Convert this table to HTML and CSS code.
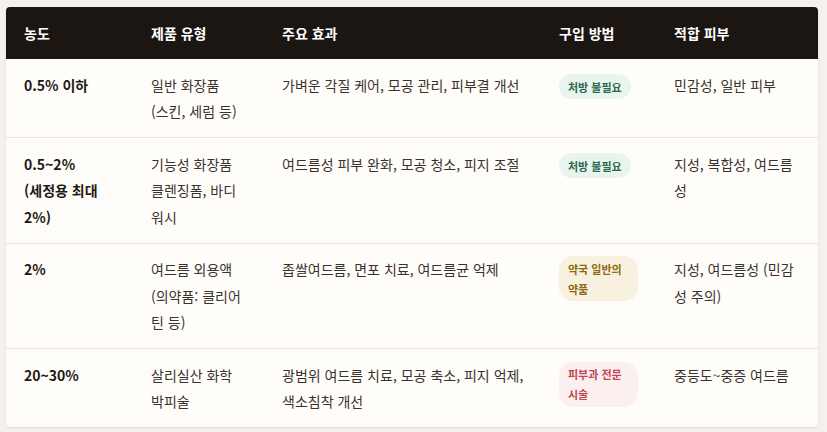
FILE: index.html
```html
<!DOCTYPE html>
<html lang="ko">
<head>
<meta charset="utf-8">
<link rel="stylesheet" href="styles.css">
</head>
<body>
<div class="card">
<table class="tbl">
<colgroup>
<col class="c1"><col class="c2"><col class="c3"><col class="c4"><col class="c5">
</colgroup>
<thead>
<tr><th>농도</th><th>제품 유형</th><th>주요 효과</th><th>구입 방법</th><th>적합 피부</th></tr>
</thead>
<tbody>
<tr>
<td class="conc">0.5% 이하</td>
<td>일반 화장품<br>(스킨, 세럼 등)</td>
<td>가벼운 각질 케어, 모공 관리, 피부결 개선</td>
<td><span class="badge green">처방 불필요</span></td>
<td>민감성, 일반 피부</td>
</tr>
<tr>
<td class="conc">0.5~2%<br>(세정용 최대 2%)</td>
<td>기능성 화장품<br>클렌징폼, 바디<br>워시</td>
<td>여드름성 피부 완화, 모공 청소, 피지 조절</td>
<td><span class="badge green">처방 불필요</span></td>
<td>지성, 복합성, 여드름성</td>
</tr>
<tr>
<td class="conc">2%</td>
<td>여드름 외용액<br>(의약품: 클리어<br>틴 등)</td>
<td>좁쌀여드름, 면포 치료, 여드름균 억제</td>
<td><span class="badge yellow">약국 일반의약품</span></td>
<td>지성, 여드름성 (민감성 주의)</td>
</tr>
<tr>
<td class="conc">20~30%</td>
<td>살리실산 화학<br>박피술</td>
<td><span class="nowrap">광범위 여드름 치료, 모공 축소, 피지 억제,</span><br>색소침착 개선</td>
<td><span class="badge red">피부과 전문 시술</span></td>
<td>중등도~중증 여드름</td>
</tr>
</tbody>
</table>
</div>
</body>
</html>
```

FILE: styles.css
```css
html, body {
  margin: 0;
  padding: 0;
  background: #f5f2ed;
}
body {
  padding: 7px 9px 8px 6px;
  font-family: "Noto Sans CJK KR", "Noto Sans", sans-serif;
  color: #3a332d;
}
.card {
  width: 812px;
  background: #fffdf9;
  border-radius: 4px;
  overflow: hidden;
  box-shadow: 0 1px 2px rgba(60, 40, 20, 0.12);
}
.tbl {
  width: 812px;
  border-collapse: collapse;
  table-layout: fixed;
}
.c1 { width: 127px; }
.c2 { width: 131px; }
.c3 { width: 277px; }
.c4 { width: 115px; }
.c5 { width: 162px; }
.tbl th {
  background: #1b1612;
  color: #ffffff;
  font-weight: 700;
  font-size: 14px;
  line-height: 26px;
  text-align: left;
  padding: 13px 18px;
}
.tbl td {
  font-size: 14px;
  line-height: 26.5px;
  padding: 12.5px 18px;
  vertical-align: top;
  border-top: 1px solid #ebe4dc;
  word-break: normal;
}
.tbl tbody tr:first-child td {
  border-top: none;
}
.tbl td.conc {
  font-weight: 700;
  color: #1f1a16;
}
.nowrap {
  white-space: nowrap;
}
.badge {
  display: inline-block;
  font-size: 11px;
  font-weight: 700;
  line-height: 20px;
  padding: 2.5px 9px;
  border-radius: 14px;
  vertical-align: middle;
}
.green { background: #eaf4ef; color: #2c6a4c; }
.yellow { background: #f8f1df; color: #8c6a10; }
.red { background: #fcefef; color: #c0474f; }
```
